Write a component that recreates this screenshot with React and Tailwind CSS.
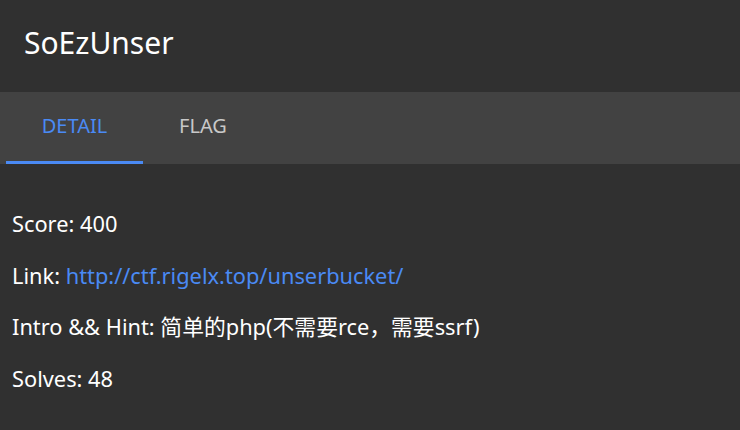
export default function App() {
  const font = { fontFamily: '"Noto Sans", "Noto Sans CJK SC", sans-serif' };
  return (
    <div className="w-[740px] h-[430px] bg-[#303030] text-white overflow-hidden" style={font}>
      <div className="h-[92px] flex items-center px-[24px] pb-[6px]">
        <h1 className="text-[30px] leading-none text-white">SoEzUnser</h1>
      </div>
      <div className="h-[72px] bg-[#424242] flex pl-[6px]">
        <div className="w-[137px] flex items-center justify-center relative text-[#4a8af4] text-[20px] pb-[4px]">
          DETAIL
          <div className="absolute left-0 right-0 bottom-0 h-[3px] bg-[#4a8af4]" />
        </div>
        <div className="w-[120px] flex items-center justify-center text-[#c8c8c8] text-[20px] pb-[4px]">FLAG</div>
      </div>
      <div className="pt-[48px] px-[12px] flex flex-col gap-[28.5px] text-[21.8px] leading-[23px]">
        <div>Score: 400</div>
        <div>Link: <span className="text-[#4a8af4]">http://ctf.rigelx.top/unserbucket/</span></div>
        <div>Intro &amp;&amp; Hint: 简单的php(不需要rce，需要ssrf)</div>
        <div>Solves: 48</div>
      </div>
    </div>
  );
}
